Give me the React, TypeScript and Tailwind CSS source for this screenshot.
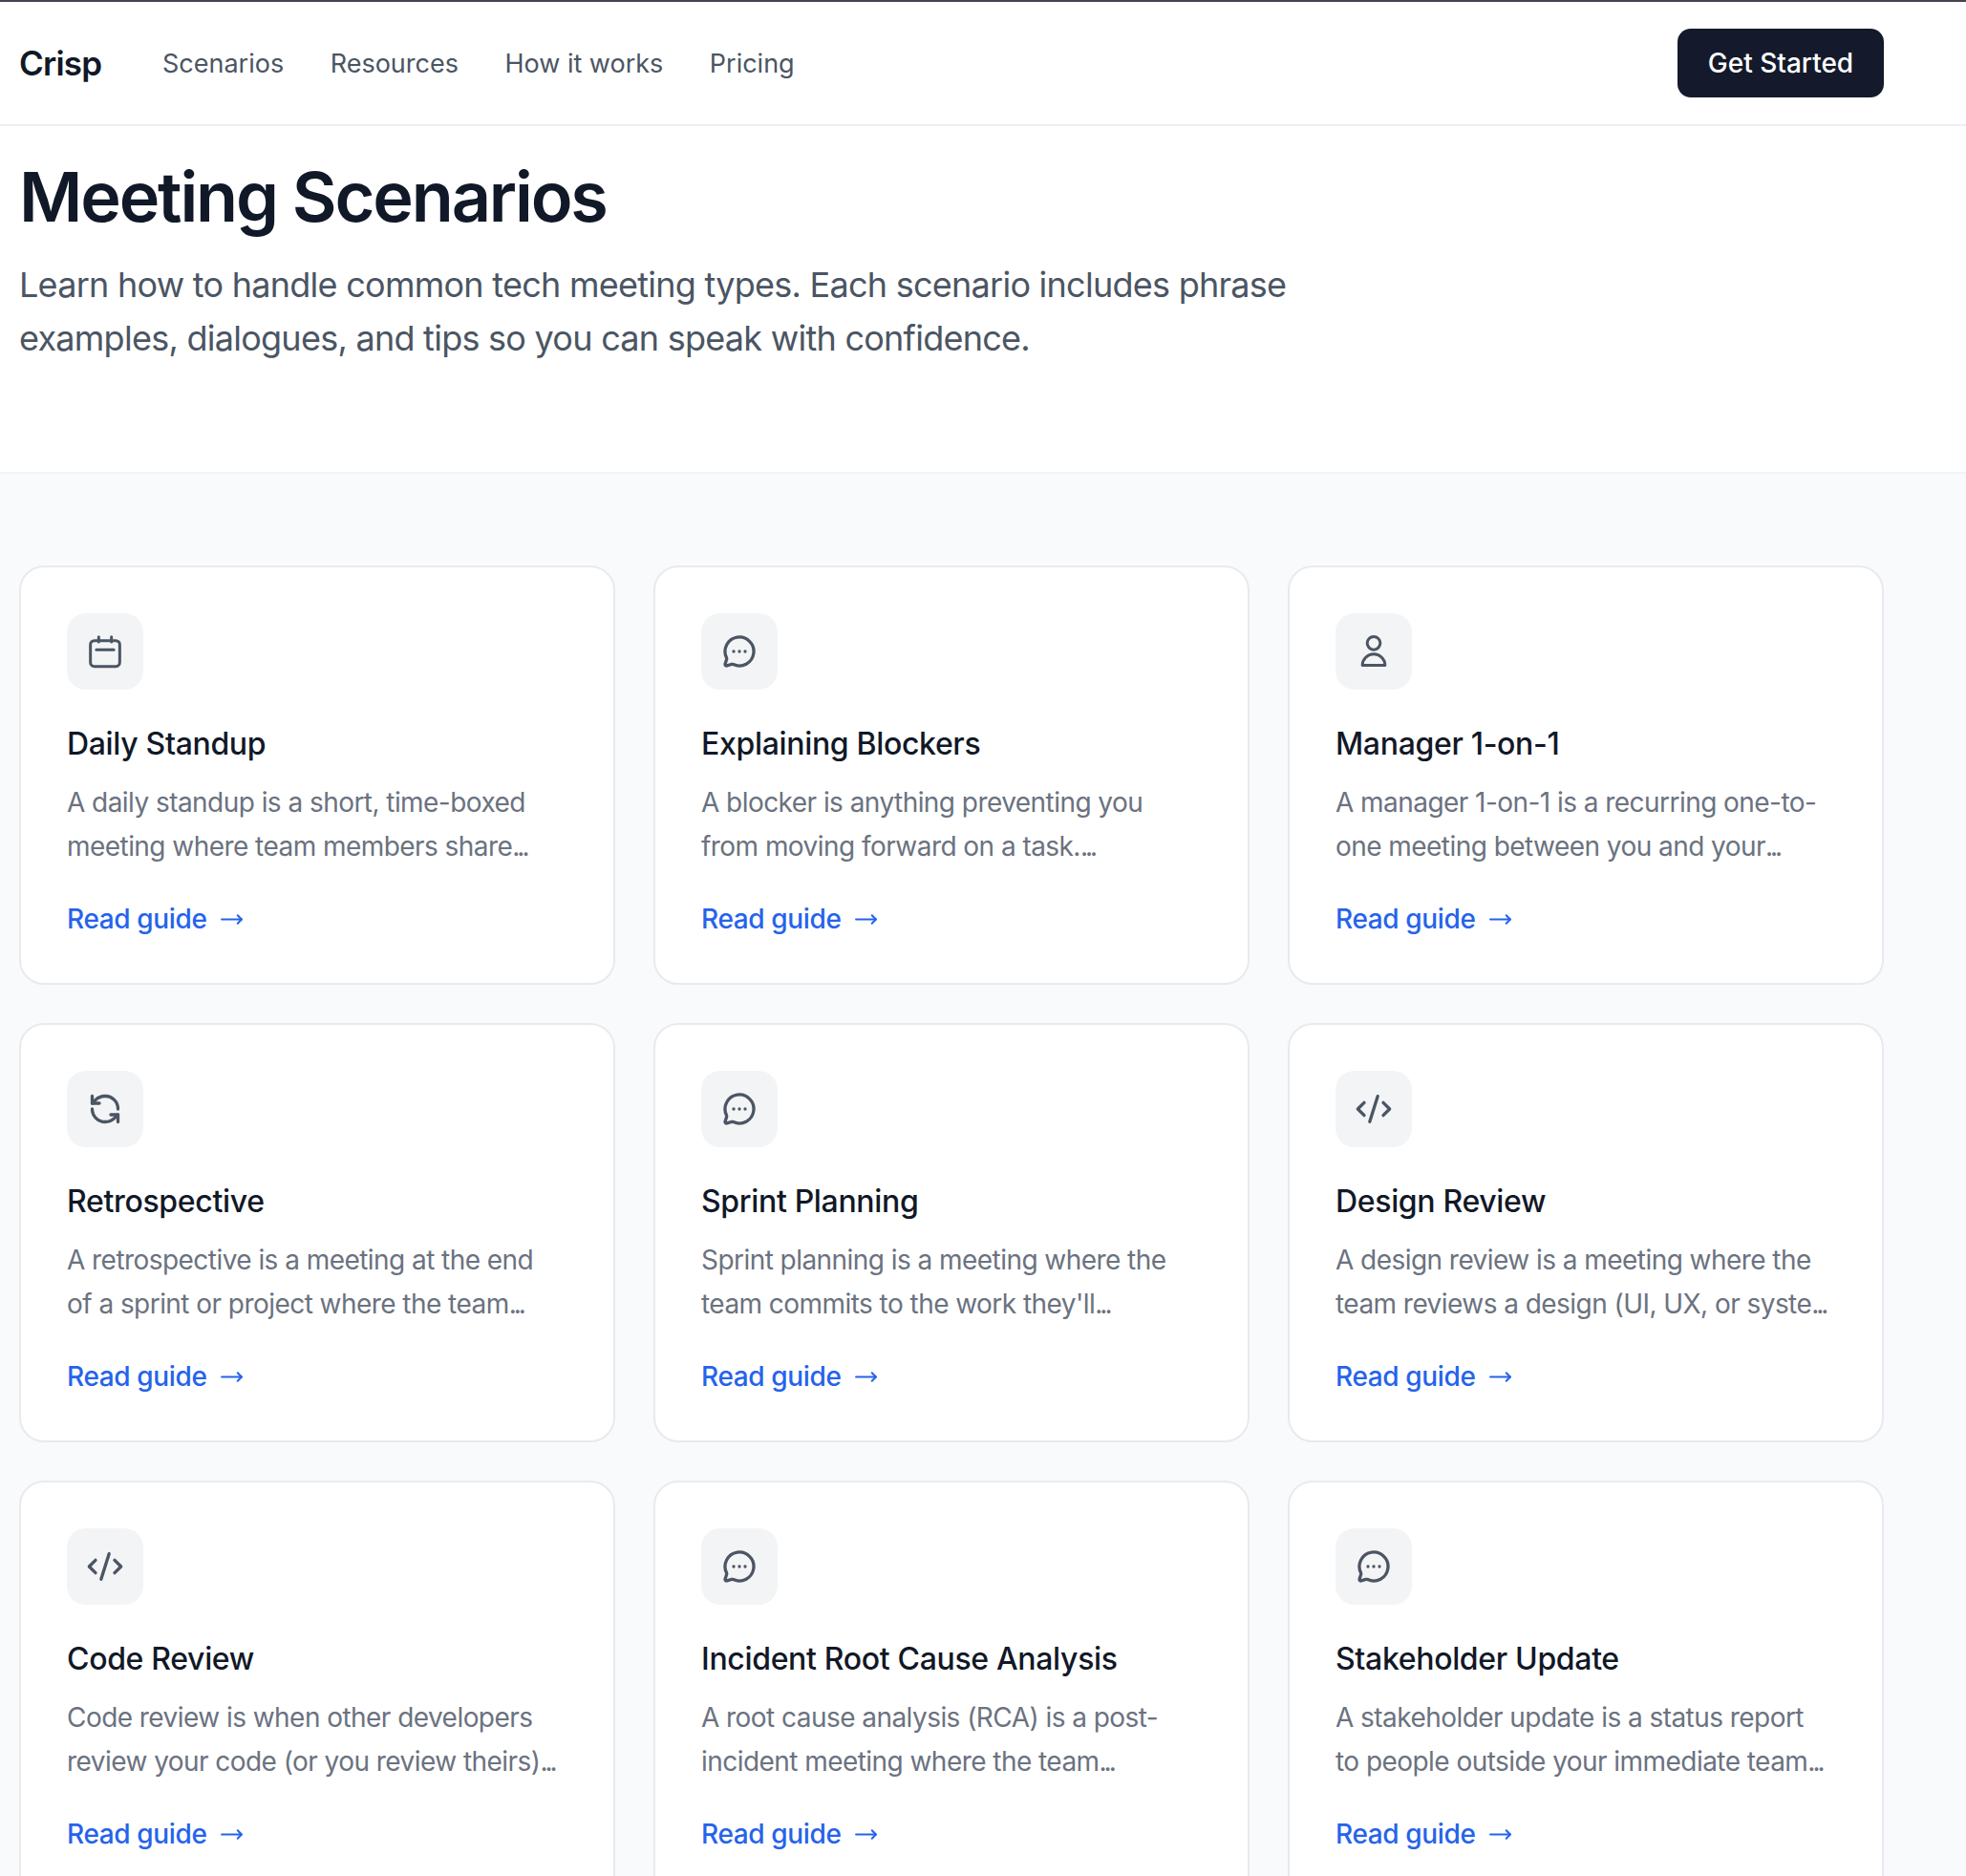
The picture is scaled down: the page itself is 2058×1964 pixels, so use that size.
import { MessageCircleMore, RefreshCcw, CodeXml, MoveRight } from "lucide-react";

const F = { fontFamily: "Inter, sans-serif" };

function Calendar() {
  return (
    <svg viewBox="0 0 24 24" className="w-10 h-10" fill="none" stroke="currentColor" strokeWidth="1.8" strokeLinecap="round" strokeLinejoin="round">
      <rect x="2.8" y="5.2" width="18.4" height="16.2" rx="2.5" />
      <path d="M8 2.8v3.2M16 2.8v3.2M6.5 11h11" />
    </svg>
  );
}

function Person() {
  return (
    <svg viewBox="0 0 24 24" className="w-10 h-10" fill="none" stroke="currentColor" strokeWidth="1.8" strokeLinecap="round" strokeLinejoin="round">
      <circle cx="12" cy="6.8" r="4.1" />
      <path d="M4.9 20.7a7.1 7 0 0 1 14.2 0z" />
    </svg>
  );
}

const msg = <MessageCircleMore className="w-9 h-9" strokeWidth={2.2} />;
const code = <CodeXml className="w-10 h-10" strokeWidth={2} />;

const cards = [
  { icon: <Calendar />, t: "Daily Standup", a: "A daily standup is a short, time-boxed", b: "meeting where team members share" },
  { icon: msg, t: "Explaining Blockers", a: "A blocker is anything preventing you", b: "from moving forward on a task." },
  { icon: <Person />, t: "Manager 1-on-1", a: "A manager 1-on-1 is a recurring one-to-", b: "one meeting between you and your" },
  { icon: <RefreshCcw className="w-9 h-9" strokeWidth={2.2} />, t: "Retrospective", a: "A retrospective is a meeting at the end", b: "of a sprint or project where the team" },
  { icon: msg, t: "Sprint Planning", a: "Sprint planning is a meeting where the", b: "team commits to the work they'll" },
  { icon: code, t: "Design Review", a: "A design review is a meeting where the", b: "team reviews a design (UI, UX, or syste" },
  { icon: code, t: "Code Review", a: "Code review is when other developers", b: "review your code (or you review theirs)" },
  { icon: msg, t: "Incident Root Cause Analysis", a: "A root cause analysis (RCA) is a post-", b: "incident meeting where the team" },
  { icon: msg, t: "Stakeholder Update", a: "A stakeholder update is a status report", b: "to people outside your immediate team" },
];

export default function App() {
  return (
    <div className="h-[1964px] overflow-hidden bg-white text-[#111827]" style={F}>
      <div className="h-[2px] bg-[#41454d]" />
      <header className="h-[130px] border-b-2 border-[#eeeff3] flex items-center pl-5 pr-[86px]">
        <span className="text-[35px] font-semibold tracking-[-0.8px] w-[151px]">Crisp</span>
        <nav className="flex gap-[48.5px] ml-[-1px] mt-[2px] text-[27px] text-[#4b5563]">
          <span>Scenarios</span>
          <span>Resources</span>
          <span>How it works</span>
          <span>Pricing</span>
        </nav>
        <button className="ml-auto h-[72px] w-[216px] rounded-[14px] bg-[#141a2b] text-white text-[28px] font-medium">Get Started</button>
      </header>
      <section className="h-[364px] pl-5 border-b-2 border-[#f3f4f6]">
        <h1 className="text-[72px] leading-[80px] font-semibold tracking-[-2.15px] pt-[34px] box-content">Meeting Scenarios</h1>
        <p className="mt-[24px] text-[36px] leading-[56px] tracking-[-0.74px] text-[#4b5563]">
          Learn how to handle common tech meeting types. Each scenario includes phrase
          <br />
          examples, dialogues, and tips so you can speak with confidence.
        </p>
      </section>
      <main className="bg-[#f9fafb] pt-[96px] pl-5 pr-[86px] pb-20">
        <div className="grid grid-cols-3 gap-x-10 gap-y-10">
          {cards.map((c) => (
            <article key={c.t} className="h-[439px] rounded-[26px] border-2 border-[#e9eaee] bg-white p-12">
              <div className="w-20 h-20 rounded-[20px] bg-[#f3f4f6] text-[#4b5563] flex items-center justify-center">{c.icon}</div>
              <h3 className="mt-[37px] text-[32px] leading-[40px] font-medium tracking-[-0.33px] text-[#111827]">{c.t}</h3>
              <p className="mt-[18px] text-[28px] leading-[46px] tracking-[-0.55px] whitespace-nowrap text-[#6b7280]">
                {c.a}
                <br />
                {c.b}
                <span className="tracking-[-3px]">...</span>
              </p>
              <div className="mt-[30px] flex items-center gap-[14px] text-[28px] leading-[46px] font-medium tracking-[-0.37px] text-[#2563eb]">
                Read guide <MoveRight className="w-[25px] h-[25px]" strokeWidth={2} />
              </div>
            </article>
          ))}
        </div>
      </main>
    </div>
  );
}
